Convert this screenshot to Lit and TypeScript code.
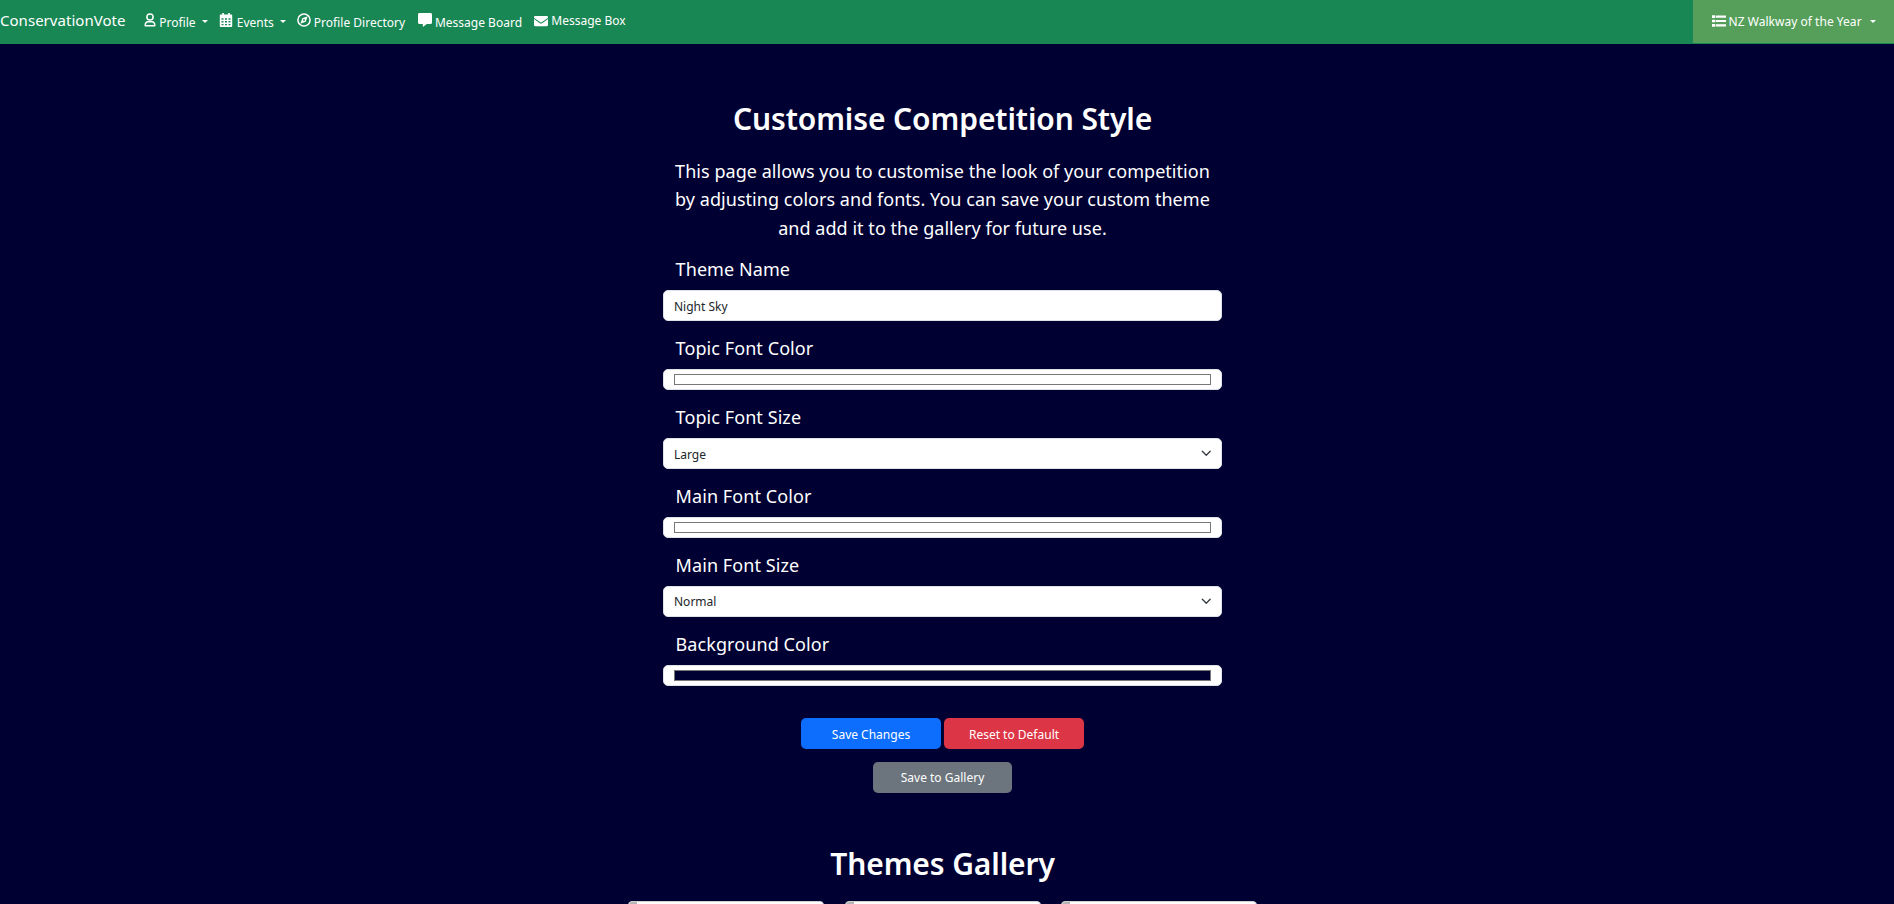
import { LitElement, html, css, svg, nothing } from "lit";
import { customElement } from "lit/decorators.js";

const icons = {
  person: svg`<svg class="icon" width="12" height="14" viewBox="0 0 12 14" fill="none" stroke="currentColor" stroke-width="1.5">
    <circle cx="6" cy="4" r="3.1"/>
    <path d="M1.2 12.7c0-2.6 1.3-3.9 3-3.9h3.6c1.7 0 3 1.3 3 3.9z" stroke-linejoin="round"/></svg>`,
  calendar: svg`<svg class="icon" width="14" height="14" viewBox="0 0 14 14" fill="currentColor">
    <path fill-rule="evenodd" d="M3.2 0h1.7v1.6h4.2V0h1.7v1.6h1.4c.6 0 1 .4 1 1V13c0 .6-.4 1-1 1H1.8c-.6 0-1-.4-1-1V2.6c0-.6.4-1 1-1h1.4zM2.5 5.2v1.5h2V5.2zm3.5 0v1.5h2V5.2zm3.5 0v1.5h2V5.2zM2.5 8.1v1.4h2V8.1zm3.5 0v1.4h2V8.1zm3.5 0v1.4h2V8.1zM2.5 10.9v1.4h2v-1.4zm3.5 0v1.4h2v-1.4zm3.5 0v1.4h2v-1.4z"/></svg>`,
  compass: svg`<svg class="icon" width="14" height="14" viewBox="0 0 14 14">
    <circle cx="7" cy="7" r="6.1" fill="none" stroke="currentColor" stroke-width="1.5"/>
    <path fill="currentColor" fill-rule="evenodd" d="M10.7 3.3 8.7 8.7 3.3 10.7 5.3 5.3zM7 6.1a.9.9 0 1 0 0 1.8.9.9 0 0 0 0-1.8z"/></svg>`,
  chat: svg`<svg class="icon" width="14" height="14" viewBox="0 0 14 14" fill="currentColor">
    <path d="M1.5 0h11c.9 0 1.5.6 1.5 1.5v8c0 .9-.6 1.5-1.5 1.5H8.8l-3.6 2.7c-.2.1-.4 0-.4-.2V11H1.5C.6 11 0 10.4 0 9.500v-8C0 .6.6 0 1.500 0z"/></svg>`,
  mail: svg`<svg class="icon" width="14" height="14" viewBox="0 0 14 14" fill="currentColor">
    <path d="M1.300 2h11.400c.7 0 1.300.5 1.300 1.200 0 .4-.2.700-.5 1L7.700 8.300c-.4.300-1 .3-1.400 0L.5 4.200c-.3-.3-.5-.6-.5-1C0 2.500.6 2 1.300 2z"/>
    <path d="M0 5l5.800 4.200c.7.500 1.700.5 2.400 0L14 5v6c0 .7-.5 1.200-1.200 1.200H1.200C.5 12.200 0 11.700 0 11z"/></svg>`,
  list: svg`<svg class="icon" width="14" height="14" viewBox="0 0 14 14" fill="currentColor">
    <path d="M0 1.300h3v2.600H0zM0 5.700h3v2.600H0zM0 10.100h3v2.600H0zM3.600 1.500h10.400v2.200H3.600zM3.600 5.900h10.400v2.200H3.600zM3.600 10.300h10.400v2.200H3.600z"/></svg>`,
};

@customElement("app-root")
class AppRoot extends LitElement {
  static styles = css`
    :host { display: block; height: 904px; overflow: hidden; background: #000033; color: #fff;
      font-family: "Noto Sans", "Open Sans", sans-serif; font-size: 12px; }
    * { box-sizing: border-box; }
    .nav { display: flex; height: 44px; background: #198754; }
    .brand { font-size: 15px; line-height: 40px; width: 144px; letter-spacing: 0.03px; }
    .links { display: flex; gap: 12px; align-items: flex-start; flex: 1; }
    .item { display: flex; align-items: center; gap: 3.3px; line-height: 18px; padding-top: 13.5px; }
    .item .icon { margin-top: -5px; }
    .item.raised { padding-top: 12px; }
    .item.raised .icon { margin-top: -1px; }
    .icon { flex: none; display: block; }
    .caret { border: 3px solid transparent; border-top-color: #fff; border-bottom: 0; margin: 0 -0.5px 3px 3px; }
    .links .item:nth-child(2) .caret { margin-right: -1.5px; }
    .links .item:nth-child(4) { margin-left: 0.6px; }
    .current { width: 201px; height: 43px; background: #569f5a; display: flex; align-items: flex-start;
      padding: 12.6px 0 0 18.5px; gap: 3px; line-height: 18px; letter-spacing: 0.03px; }
    .current .icon { margin-top: 1.5px; }
    .current .caret { margin: 7px 0 0 5px; }
    .main { padding: 56px 9px 0 0; display: flex; flex-direction: column; align-items: center; }
    .title { margin: 0; font-size: 30px; line-height: 38px; font-weight: 600; letter-spacing: -0.1px; }
    .intro { margin: 18.5px 0 13px; font-size: 18px; line-height: 28.5px; text-align: center; letter-spacing: 0.04px; }
    .form { width: 559px; display: flex; flex-direction: column; gap: 12.8px; }
    .group { display: flex; flex-direction: column; gap: 6.4px; }
    .label { font-size: 18px; line-height: 28.8px; padding-left: 12.6px; letter-spacing: 0.08px; }
    .control { appearance: none; width: 100%; height: 30.8px; margin: 0; border: 1px solid #dee2e6; border-radius: 5px;
      background: #fff; color: #212529; font: inherit; padding: 1px 10px 0; grid-area: 1 / 1; display: block; outline: none; }
    .color { height: 21.2px; padding: 4.5px 10px; }
    .color::-webkit-color-swatch-wrapper { padding: 0; }
    .color::-webkit-color-swatch { border: 1px solid #777; border-radius: 0; }
    .pick { display: grid; align-items: center; justify-items: end; }
    .chevron { grid-area: 1 / 1; margin-right: 11px; pointer-events: none; }
    .actions { display: flex; gap: 3px; margin-top: 32.4px; }
    .actions.second { margin-top: 12.8px; }
    .btn { width: 140px; height: 30.8px; border: 0; border-radius: 5px; color: #fff; font: inherit; padding: 1px 0 0; }
    .primary { background: #0d6efd; }
    .danger { background: #dc3545; }
    .secondary { background: #6c757d; width: 139px; }
    .gallery { margin-top: 51.9px; }
    .cards { display: flex; gap: 20.5px; margin-top: 18.5px; }
    .card { width: 196px; height: 120px; border: 1px solid #cfcfcf; border-radius: 4px; background: #fff; overflow: hidden; }
    .thumb { width: 8px; height: 8px; background: #b5b5b5; }
  `;

  item(icon: unknown, text: string, caret = false, raised = false) {
    return html`<div class="item ${raised ? "raised" : ""}">${icon}<span>${text}</span>${caret ? html`<i class="caret"></i>` : nothing}</div>`;
  }
  group(label: string, control: unknown) {
    return html`<label class="group"><span class="label">${label}</span>${control}</label>`;
  }
  select(value: string) {
    return html`<div class="pick"><select class="control"><option>${value}</option></select>
      <svg class="chevron" width="10.5" height="10.5" viewBox="0 0 16 16" fill="none" stroke="#343a40" stroke-width="2" stroke-linecap="round" stroke-linejoin="round"><path d="m2 5 6 6 6-6"/></svg></div>`;
  }
  color(value: string) {
    return html`<input class="control color" type="color" .value=${value}>`;
  }

  render() {
    return html`
      <nav class="nav">
        <div class="brand">ConservationVote</div>
        <div class="links">
          ${this.item(icons.person, "Profile", true)}
          ${this.item(icons.calendar, "Events", true)}
          ${this.item(icons.compass, "Profile Directory")}
          ${this.item(icons.chat, "Message Board")}
          ${this.item(icons.mail, "Message Box", false, true)}
        </div>
        <div class="current">${icons.list}<span>NZ Walkway of the Year</span><i class="caret"></i></div>
      </nav>
      <main class="main">
        <h1 class="title">Customise Competition Style</h1>
        <p class="intro">This page allows you to customise the look of your competition<br>by adjusting colors and fonts. You can save your custom theme<br>and add it to the gallery for future use.</p>
        <form class="form">
          ${this.group("Theme Name", html`<input class="control" type="text" .value=${"Night Sky"}>`)}
          ${this.group("Topic Font Color", this.color("#ffffff"))}
          ${this.group("Topic Font Size", this.select("Large"))}
          ${this.group("Main Font Color", this.color("#ffffff"))}
          ${this.group("Main Font Size", this.select("Normal"))}
          ${this.group("Background Color", this.color("#000033"))}
        </form>
        <div class="actions"><button class="btn primary">Save Changes</button><button class="btn danger">Reset to Default</button></div>
        <div class="actions second"><button class="btn secondary">Save to Gallery</button></div>
        <h2 class="title gallery">Themes Gallery</h2>
        <div class="cards">${[0, 1, 2].map(() => html`<div class="card"><div class="thumb"></div></div>`)}</div>
      </main>`;
  }
}
